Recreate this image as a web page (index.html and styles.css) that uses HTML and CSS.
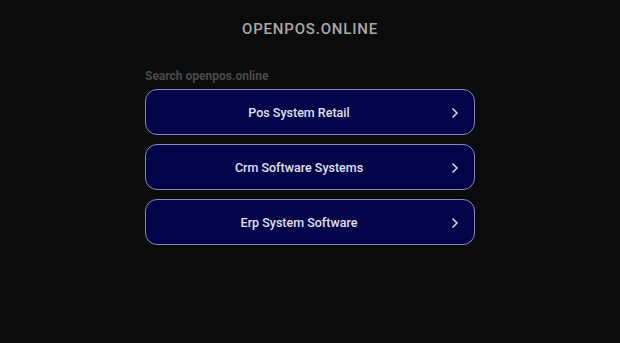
FILE: index.html
```html
<!DOCTYPE html>
<html>
<head>
<meta charset="utf-8">
<link rel="stylesheet" href="styles.css">
</head>
<body>
<div class="page">
  <h1 class="domain">OPENPOS.ONLINE</h1>
  <div class="search">
    <div class="label">Search openpos.online</div>
    <a class="item" href="#"><span>Pos System Retail</span><svg class="chev" viewBox="0 0 8 12" width="8" height="12"><path d="M1.5 1.5 L6 6 L1.5 10.5" fill="none" stroke="#d8d8f0" stroke-width="1.5"/></svg></a>
    <a class="item" href="#"><span>Crm Software Systems</span><svg class="chev" viewBox="0 0 8 12" width="8" height="12"><path d="M1.5 1.5 L6 6 L1.5 10.5" fill="none" stroke="#d8d8f0" stroke-width="1.5"/></svg></a>
    <a class="item" href="#"><span>Erp System Software</span><svg class="chev" viewBox="0 0 8 12" width="8" height="12"><path d="M1.5 1.5 L6 6 L1.5 10.5" fill="none" stroke="#d8d8f0" stroke-width="1.5"/></svg></a>
  </div>
</div>
</body>
</html>
```
FILE: styles.css
```css
html, body {
  margin: 0;
  padding: 0;
  background: #0b0b0b;
  font-family: Roboto, "Liberation Sans", Arial, sans-serif;
}
.page {
  display: flex;
  flex-direction: column;
  align-items: center;
  padding-top: 20px;
}
.domain {
  margin: 0;
  font-size: 15px;
  line-height: 18px;
  font-weight: 500;
  letter-spacing: 0.8px;
  color: #a9a9a9;
}
.search {
  width: 330px;
  margin-top: 30px;
  display: flex;
  flex-direction: column;
  gap: 9px;
}
.label {
  font-size: 12px;
  font-weight: bold;
  color: #4a4a4a;
  line-height: 16px;
  margin-bottom: -4px;
}
.item {
  position: relative;
  display: flex;
  align-items: center;
  justify-content: center;
  height: 46px;
  box-sizing: border-box;
  padding-right: 22px;
  border: 1px solid #8a8ab8;
  border-radius: 12px;
  background: #03034a;
  color: #e0e0f0;
  font-size: 12.5px;
  font-weight: 500;
  text-decoration: none;
}
.chev {
  position: absolute;
  right: 15px;
  top: 17px;
}
```
